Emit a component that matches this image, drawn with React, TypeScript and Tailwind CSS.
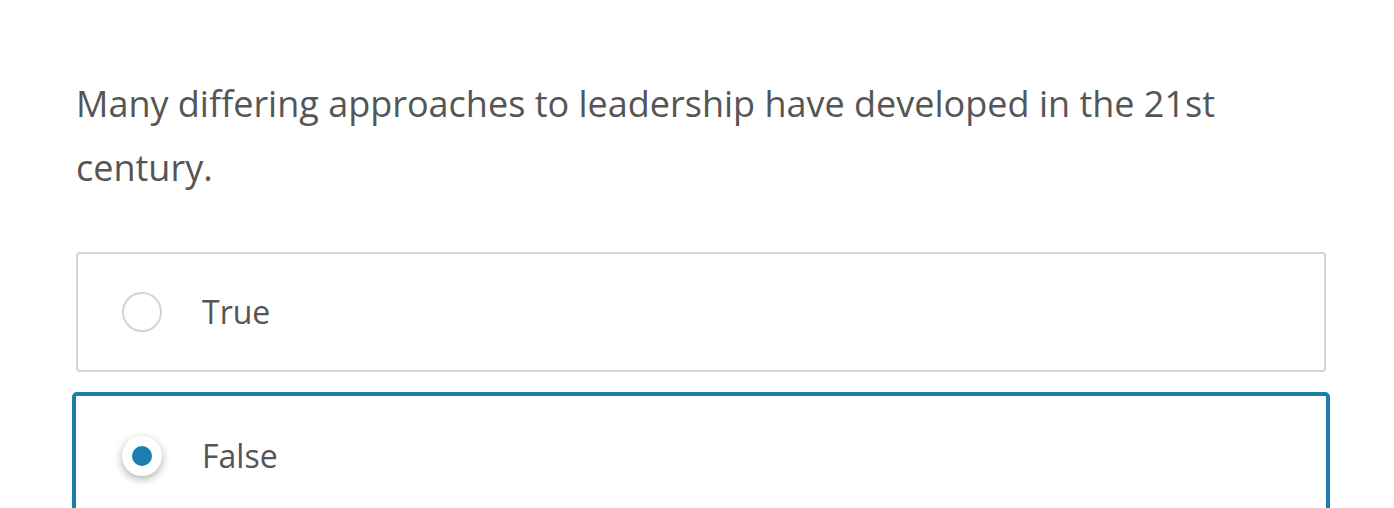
import React from 'react'

const options = [
  { label: 'True', selected: false },
  { label: 'False', selected: true },
]

function Radio({ selected }: { selected: boolean }) {
  if (selected) {
    return (
      <div className="flex h-10 w-10 shrink-0 items-center justify-center rounded-full bg-white shadow-[0_3px_8px_rgba(0,0,0,0.32)]">
        <div className="h-5 w-5 rounded-full bg-[#1a7fad]" />
      </div>
    )
  }
  return <div className="h-10 w-10 shrink-0 rounded-full border-2 border-[#d4d4d4] bg-white" />
}

export default function App() {
  return (
    <div className="h-[508px] overflow-hidden bg-white pl-[76px] pt-[72px] font-['Open_Sans',sans-serif] text-[#555555]">
      <p className="w-[1250px] text-[36px] leading-[64px]">
        Many differing approaches to leadership have developed in the 21st century.
      </p>

      <div className="mt-[52px] flex flex-col gap-5">
        {options.map((o) =>
          o.selected ? (
            <div
              key={o.label}
              className="-ml-1 flex h-[128px] w-[1258px] shrink-0 items-center rounded-[5px] border-[4px] border-[#1a7fad] pl-[46px]"
            >
              <Radio selected />
              <span className="ml-10 text-[32px]">{o.label}</span>
            </div>
          ) : (
            <div
              key={o.label}
              className="flex h-[120px] w-[1250px] shrink-0 items-center rounded-[4px] border-2 border-[#d4d4d4] pl-[44px]"
            >
              <Radio selected={false} />
              <span className="ml-10 text-[32px]">{o.label}</span>
            </div>
          )
        )}
      </div>
    </div>
  )
}
